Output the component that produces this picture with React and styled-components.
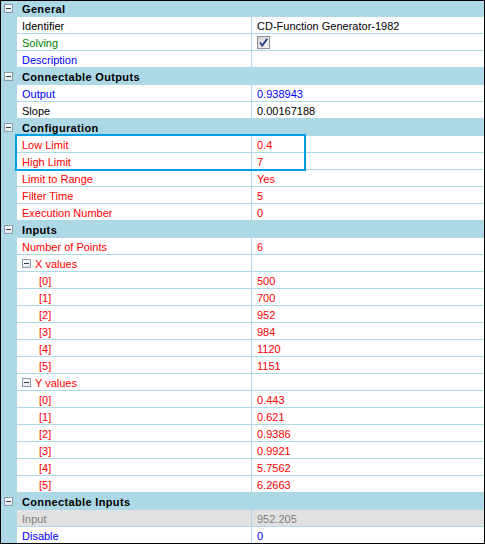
import React from "react";
import styled, { createGlobalStyle } from "styled-components";

const GlobalStyle = createGlobalStyle`
  html, body {
    margin: 0;
    padding: 0;
    background: #ffffff;
  }
  body {
    font-family: "Liberation Sans", Arial, sans-serif;
    font-size: 11px;
  }
`;

const SEP = "#add8e6";

const colors = {
  black: "#000000",
  green: "#008000",
  blue: "#0000ff",
  red: "#ff0000",
  grey: "#7f7f7f",
};

const Grid = styled.div`
  position: relative;
  width: 485px;
  height: 544px;
  box-sizing: border-box;
  border: 1px solid #000000;
  overflow: hidden;
  background: #ffffff;
`;

const List = styled.div`
  margin-top: -1px;
  display: flex;
  flex-direction: column;
`;

const Row = styled.div`
  display: grid;
  grid-template-columns: 16px 235px 1fr;
  height: 17px;
`;

const Gutter = styled.div`
  background: ${SEP};
  display: flex;
  align-items: flex-start;
  padding: 4px 0 0 3px;
  box-sizing: border-box;
`;

const HeaderTitle = styled.div`
  grid-column: 2 / 4;
  background: ${SEP};
  font-weight: bold;
  color: #000000;
  line-height: 16px;
  padding: 1px 0 0 5px;
  letter-spacing: 0.35px;
  white-space: nowrap;
`;

const Cell = styled.div`
  box-sizing: border-box;
  height: 17px;
  border-bottom: 1px solid ${SEP};
  border-right: ${(p) => (p.$name ? `1px solid ${SEP}` : "none")};
  background: ${(p) => (p.$disabled ? "#e1e1e1" : "#ffffff")};
  color: ${(p) => colors[p.$color] || colors.black};
  line-height: 16px;
  padding-left: ${(p) => p.$indent || 5}px;
  padding-top: 1px;
  white-space: nowrap;
  overflow: hidden;
  display: flex;
  align-items: center;
`;

const Expander = styled.span`
  display: inline-block;
  position: relative;
  width: 9px;
  height: 9px;
  box-sizing: border-box;
  border: 1px solid #8a9aa8;
  background: linear-gradient(#ffffff, #e4e8ec);
  flex-shrink: 0;
  margin-right: ${(p) => (p.$inline ? "4px" : "0")};
  margin-top: ${(p) => (p.$inline ? "-1px" : "0")};

  &::after {
    content: "";
    position: absolute;
    left: 1px;
    right: 1px;
    top: 3px;
    height: 1px;
    background: #2c3e50;
  }
`;

const Highlight = styled.div`
  position: absolute;
  left: 14px;
  top: 133px;
  width: 291px;
  height: 37px;
  box-sizing: border-box;
  border: 2px solid #009fe3;
  pointer-events: none;
`;

const CheckBox = () => (
  <svg width="13" height="13" viewBox="0 0 13 13" style={{ marginTop: -1 }}>
    <defs>
      <linearGradient id="cbfill" x1="0" y1="0" x2="1" y2="1">
        <stop offset="0" stopColor="#d4d4d4" />
        <stop offset="1" stopColor="#f4f4f4" />
      </linearGradient>
    </defs>
    <rect x="0" y="0" width="13" height="13" fill="#8e8f8f" />
    <rect x="1" y="1" width="11" height="11" fill="url(#cbfill)" />
    <path d="M3 6.5 L5.3 9.6 L10.2 2.8" fill="none" stroke="#26378c" strokeWidth="1.8" />
  </svg>
);

const idx = (vals) =>
  vals.map((v, i) => ({ name: `[${i}]`, value: v, color: "red", indent: 22 }));

const sections = [
  {
    title: "General",
    rows: [
      { name: "Identifier", value: "CD-Function Generator-1982" },
      { name: "Solving", color: "green", checkbox: true },
      { name: "Description", color: "blue", value: "" },
    ],
  },
  {
    title: "Connectable Outputs",
    rows: [
      { name: "Output", color: "blue", value: "0.938943" },
      { name: "Slope", value: "0.00167188" },
    ],
  },
  {
    title: "Configuration",
    rows: [
      { name: "Low Limit", color: "red", value: "0.4" },
      { name: "High Limit", color: "red", value: "7" },
      { name: "Limit to Range", color: "red", value: "Yes" },
      { name: "Filter Time", color: "red", value: "5" },
      { name: "Execution Number", color: "red", value: "0" },
    ],
  },
  {
    title: "Inputs",
    rows: [
      { name: "Number of Points", color: "red", value: "6" },
      { name: "X values", color: "red", value: "", group: true },
      ...idx(["500", "700", "952", "984", "1120", "1151"]),
      { name: "Y values", color: "red", value: "", group: true },
      ...idx(["0.443", "0.621", "0.9386", "0.9921", "5.7562", "6.2663"]),
    ],
  },
  {
    title: "Connectable Inputs",
    rows: [
      { name: "Input", color: "grey", value: "952.205", disabled: true },
      { name: "Disable", color: "blue", value: "0" },
    ],
  },
];

const PropertyRow = ({ row }) => (
  <Row>
    <Gutter />
    <Cell
      $name
      $color={row.color}
      $disabled={row.disabled}
      $indent={row.group ? 5 : row.indent}
    >
      {row.group && <Expander $inline />}
      {row.name}
    </Cell>
    <Cell $color={row.color} $disabled={row.disabled}>
      {row.checkbox ? <CheckBox /> : row.value}
    </Cell>
  </Row>
);

const App = () => (
  <>
    <GlobalStyle />
    <Grid>
      <List>
        {sections.map((s) => (
          <React.Fragment key={s.title}>
            <Row>
              <Gutter>
                <Expander />
              </Gutter>
              <HeaderTitle>{s.title}</HeaderTitle>
            </Row>
            {s.rows.map((r, i) => (
              <PropertyRow key={s.title + i} row={r} />
            ))}
          </React.Fragment>
        ))}
      </List>
      <Highlight />
    </Grid>
  </>
);

export default App;
